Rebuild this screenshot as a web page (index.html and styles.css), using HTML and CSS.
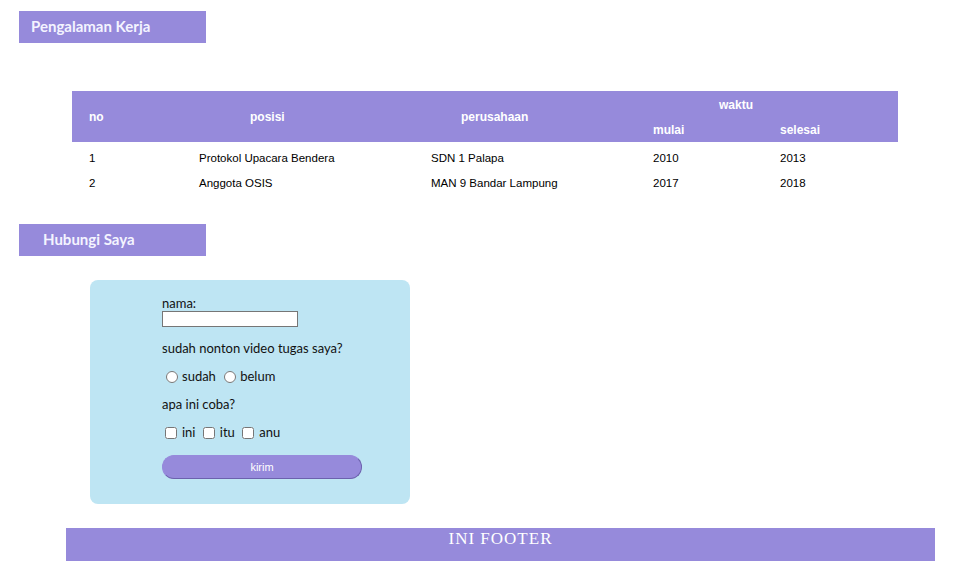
FILE: index.html
```html
<!DOCTYPE html>
<html lang="id">
<head>
<meta charset="utf-8">
<title>Profil</title>
<link rel="stylesheet" href="styles.css">
</head>
<body>
<main class="page">
  <h3 class="title title-exp">Pengalaman Kerja</h3>
  <table class="exp">
    <colgroup>
      <col class="c-no"><col class="c-pos"><col class="c-per"><col class="c-mul"><col class="c-sel">
    </colgroup>
    <thead>
      <tr class="h1">
        <th rowspan="2" class="th-no">no</th>
        <th rowspan="2" class="th-pos">posisi</th>
        <th rowspan="2" class="th-per">perusahaan</th>
        <th colspan="2" class="th-wak">waktu</th>
      </tr>
      <tr class="h2">
        <th class="th-sub">mulai</th>
        <th class="th-sub">selesai</th>
      </tr>
    </thead>
    <tbody>
      <tr class="r-first">
        <td class="td-no">1</td><td>Protokol Upacara Bendera</td><td>SDN 1 Palapa</td><td>2010</td><td>2013</td>
      </tr>
      <tr>
        <td class="td-no">2</td><td>Anggota OSIS</td><td>MAN 9 Bandar Lampung</td><td>2017</td><td>2018</td>
      </tr>
    </tbody>
  </table>

  <h3 class="title title-contact">Hubungi Saya</h3>
  <form class="contact">
    <div class="name-field">
      <label for="nama" class="lbl">nama:</label>
      <input type="text" id="nama" class="txt">
    </div>
    <p class="q">sudah nonton video tugas saya?</p>
    <div class="opts"><input type="radio" name="v" id="v1"><label for="v1">sudah</label> <input type="radio" name="v" id="v2"><label for="v2">belum</label></div>
    <p class="q">apa ini coba?</p>
    <div class="opts"><input type="checkbox" id="c1"><label for="c1">ini</label> <input type="checkbox" id="c2"><label for="c2">itu</label> <input type="checkbox" id="c3"><label for="c3">anu</label></div>
    <button type="button" class="btn">kirim</button>
  </form>

  <footer class="footer">INI FOOTER</footer>
</main>
</body>
</html>
```
FILE: styles.css
```css
html, body { margin: 0; padding: 0; background: #fff; }
.page { padding-top: 11px; display: flex; flex-direction: column; align-items: flex-start; }

.title {
  margin: 0 0 0 19px;
  width: 187px;
  height: 32px;
  box-sizing: border-box;
  padding-bottom: 3px;
  background: #968adb;
  color: #f4f4ff;
  font-family: "Lato", "Open Sans", sans-serif;
  font-weight: 700;
  font-size: 15px;
  display: flex;
  align-items: center;
}
.title-exp { padding-left: 12px; }
.title-contact { padding-left: 24px; margin-top: 29px; }

.exp {
  margin: 48px 0 0 72px;
  border-collapse: collapse;
  border-spacing: 0;
  table-layout: fixed;
  width: 826px;
  font-family: "Liberation Sans", Arial, sans-serif;
  font-size: 12px;
  color: #000;
}
.c-no { width: 127px; }
.c-pos { width: 232px; }
.c-per { width: 222px; }
.c-mul { width: 127px; }
.c-sel { width: 118px; }

.exp thead { background: #968adb; }
.exp th { color: #fff; font-weight: 700; text-align: left; padding: 0; vertical-align: middle; }
.exp .h1 { height: 27px; }
.exp .h2 { height: 24px; }
.th-no { padding-left: 17px !important; }
.th-pos { padding-left: 51px !important; }
.th-per { padding-left: 30px !important; }
.th-wak { padding-left: 66px !important; }

.exp td { padding: 0; height: 25px; vertical-align: middle; white-space: nowrap; font-size: 11.5px; }
.exp .r-first td { padding-top: 3px; }
.exp .td-no { padding-left: 17px; }

.contact {
  margin: 24px 0 0 90px;
  width: 320px;
  box-sizing: border-box;
  padding: 15px 0 25px 72px;
  background: #bee5f3;
  border-radius: 8px;
  font-family: "Lato", "Open Sans", sans-serif;
  font-size: 13px;
  color: #111;
  display: flex;
  flex-direction: column;
  align-items: flex-start;
}
.name-field { display: flex; flex-direction: column; align-items: flex-start; }
.lbl { line-height: 16px; }
.txt {
  margin: 0;
  width: 136px;
  height: 16px;
  box-sizing: border-box;
  border: 1px solid #767676;
  padding: 0 2px;
  background: #fff;
}
.q { margin: 12px 0 0; line-height: 18px; }
.q + .opts { margin-top: 10px; }
.opts + .q { margin-top: 10px; }
.opts { line-height: 18px; height: 18px; display: block; }
.opts input[type="radio"] { margin: 0 4px 0 4px; vertical-align: -2px; width: 12px; height: 12px; }
.opts input[type="checkbox"] { margin: 0 5px 0 3px; vertical-align: -2px; width: 12px; height: 12px; }
.opts label { margin-right: 1px; }

.btn {
  margin-top: 14px;
  width: 200px;
  height: 24px;
  border-radius: 12px;
  background: #968adb;
  border: 1px solid;
  border-color: #968adb #6c61ad #6c61ad #968adb;
  color: #fff;
  font-family: "Liberation Sans", Arial, sans-serif;
  font-size: 11px;
  padding: 0;
}

.footer {
  margin: 24px 0 0 66px;
  width: 869px;
  box-sizing: border-box;
  padding: 1px 0 14px;
  background: #968adb;
  color: #fff;
  text-align: center;
  font-family: "Liberation Serif", "Times New Roman", serif;
  font-size: 17px;
  letter-spacing: 1px;
}
```
